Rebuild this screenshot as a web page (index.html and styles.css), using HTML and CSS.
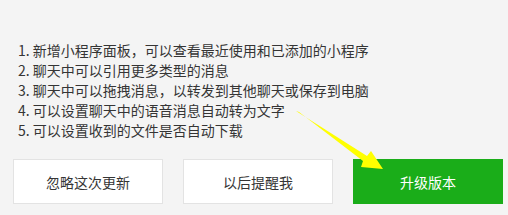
FILE: index.html
```html
<!DOCTYPE html>
<html>
<head>
    <title>更新提示</title>
    <link rel="stylesheet" href="styles.css">
</head>
<body>
    <div class="update">
        <ol class="notes">
            <li>1. 新增小程序面板，可以查看最近使用和已添加的小程序</li>
            <li>2. 聊天中可以引用更多类型的消息</li>
            <li>3. 聊天中可以拖拽消息，以转发到其他聊天或保存到电脑</li>
            <li>4. 可以设置聊天中的语音消息自动转为文字</li>
            <li>5. 可以设置收到的文件是否自动下载</li>
        </ol>
        <div class="actions">
            <button class="btn">忽略这次更新</button>
            <button class="btn">以后提醒我</button>
            <button class="btn primary">升级版本</button>
        </div>
        <svg class="pointer" width="508" height="215" viewBox="0 0 508 215">
            <polygon fill="#ffff00" points="296,111 299,112 363,161 361,167 383,169 371,151 367,156"/>
        </svg>
    </div>
</body>
</html>
```

FILE: styles.css
```css
body { margin: 0; background: #f4f4f4; font-family: "Noto Sans CJK SC", "Microsoft YaHei", sans-serif; color: #353535; }
.update { position: relative; width: 508px; height: 215px; }
.notes { list-style: none; margin: 0; padding: 40px 0 0 18px; font-size: 14px; line-height: 20px; }
.actions { display: flex; gap: 20px; padding: 19px 0 0 13px; }
.btn { width: 150px; height: 45px; border: 1px solid #e3e3e3; background: #fff; color: #353535; font-family: inherit; font-size: 14px; padding: 0; }
.btn.primary { background: #1aad19; border-color: #1aad19; color: #fff; }
.pointer { position: absolute; left: 0; top: 0; pointer-events: none; }
```
